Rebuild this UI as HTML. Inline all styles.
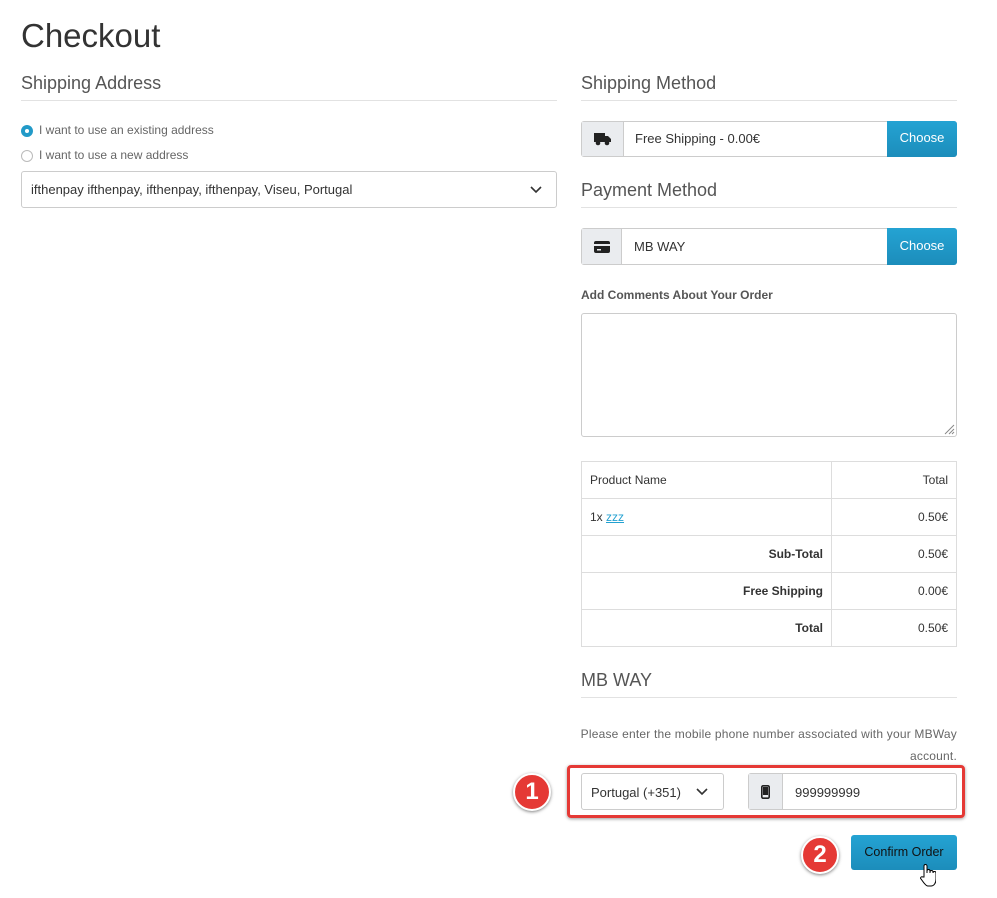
<!DOCTYPE html>
<html><head><meta charset="utf-8"><style>
*{box-sizing:border-box;margin:0;padding:0}
body{width:997px;height:898px;background:#fff;font-family:"Liberation Sans",sans-serif;color:#333;position:relative;overflow:hidden}
.a{position:absolute}
h1{position:absolute;left:21px;top:17px;font-size:33px;font-weight:normal;color:#333}
.h{position:absolute;font-size:18px;color:#555;}
.hr{position:absolute;height:1px;background:#e2e2e2}
.box{position:absolute;border:1px solid #ccc;border-radius:3px;background:#fff}
.addon{position:absolute;background:#eaecef;border-right:1px solid #ccc;top:0;bottom:0;left:0}
.btn{position:absolute;background:linear-gradient(#24a3d3,#1c8dbb);color:#fff;font-size:13px;text-align:center;border-radius:0 3px 3px 0}
.t{position:absolute;font-size:13px}
table{position:absolute;left:581px;top:461px;width:376px;border-collapse:collapse;font-size:12px;color:#333}
td{border:1px solid #ddd;height:37px;padding:0 8px}
.r{text-align:right}
.circ{position:absolute;width:38px;height:38px;border-radius:50%;background:#e53935;border:2px solid #fff;box-shadow:0 1px 3px rgba(0,0,0,.5);color:#fff;font-weight:bold;font-size:24px;text-align:center;line-height:34px}
</style></head><body>
<h1>Checkout</h1>
<div class="h" style="left:21px;top:73px">Shipping Address</div>
<div class="hr" style="left:21px;top:100px;width:536px"></div>
<div class="a" style="left:21px;top:125px;width:12px;height:12px;border-radius:50%;background:#229ac8"><div class="a" style="left:4px;top:4px;width:4px;height:4px;background:#fff;border-radius:50%"></div></div>
<div class="t" style="left:39px;top:123px;font-size:12px;color:#666">I want to use an existing address</div>
<div class="a" style="left:21px;top:150px;width:12px;height:12px;border-radius:50%;border:1px solid #bbb"></div>
<div class="t" style="left:39px;top:148px;font-size:12px;color:#666">I want to use a new address</div>
<div class="box" style="left:21px;top:171px;width:536px;height:37px"><div class="t" style="left:9px;top:10px">ifthenpay ifthenpay, ifthenpay, ifthenpay, Viseu, Portugal</div>
<svg class="a" style="left:508px;top:14px" width="12" height="8"><path d="M1 1l5 5 5-5" stroke="#333" stroke-width="1.6" fill="none"/></svg></div>

<div class="h" style="left:581px;top:73px">Shipping Method</div>
<div class="hr" style="left:581px;top:100px;width:376px"></div>
<div class="box" style="left:581px;top:121px;width:376px;height:36px"><div class="addon" style="width:42px"><svg class="a" style="left:12px;top:11px" width="17" height="13"><rect x="0" y="0" width="11" height="9" fill="#222"/><path d="M11 3h3l3 3v3h-6z" fill="#222"/><circle cx="4" cy="10" r="2.3" fill="#222"/><circle cx="13" cy="10" r="2.3" fill="#222"/></svg></div>
<div class="t" style="left:53px;top:9px">Free Shipping - 0.00€</div><div class="btn" style="left:305px;top:-1px;width:70px;height:36px;line-height:34px">Choose</div></div>

<div class="h" style="left:581px;top:180px">Payment Method</div>
<div class="hr" style="left:581px;top:207px;width:376px"></div>
<div class="box" style="left:581px;top:228px;width:376px;height:37px"><div class="addon" style="width:40px"><svg class="a" style="left:12px;top:12px" width="16" height="12"><rect x="0" y="0" width="16" height="12" rx="2" fill="#222"/><rect x="0" y="3" width="16" height="2" fill="#eaecef"/><rect x="3" y="8" width="4" height="1.5" fill="#eaecef"/></svg></div>
<div class="t" style="left:52px;top:10px">MB WAY</div><div class="btn" style="left:305px;top:-1px;width:70px;height:37px;line-height:35px">Choose</div></div>

<div class="t" style="left:581px;top:288px;font-size:12px;font-weight:bold;color:#555;top:288px;margin-top:0">Add Comments About Your Order</div>
<div class="box" style="left:581px;top:313px;width:376px;height:124px"><svg class="a" style="right:1px;bottom:1px" width="12" height="12"><path d="M11 2L2 11M11 6L6 11M11 9L9 11" stroke="#888"/></svg></div>

<table>
<tr><td>Product Name</td><td class="r">Total</td></tr>
<tr><td>1x <span style="color:#23a1d1;text-decoration:underline">zzz</span></td><td class="r">0.50€</td></tr>
<tr><td class="r" style="width:250px"><b>Sub-Total</b></td><td class="r">0.50€</td></tr>
<tr><td class="r"><b>Free Shipping</b></td><td class="r">0.00€</td></tr>
<tr><td class="r"><b>Total</b></td><td class="r">0.50€</td></tr>
</table>

<div class="h" style="left:581px;top:670px">MB WAY</div>
<div class="hr" style="left:581px;top:697px;width:376px"></div>
<div class="t" style="right:40px;top:723px;font-size:12px;color:#666;text-align:right;line-height:22px;letter-spacing:0.2px">Please enter the mobile phone number associated with your MBWay<br>account.</div>

<div class="a" style="left:567px;top:765px;width:398px;height:53px;border:3px solid #e53935;border-radius:4px;box-shadow:0 1px 3px rgba(0,0,0,.4)"></div>
<div class="box" style="left:581px;top:773px;width:143px;height:37px"><div class="t" style="left:9px;top:11px">Portugal (+351)</div><svg class="a" style="left:114px;top:14px" width="12" height="8"><path d="M1 1l5 5 5-5" stroke="#333" stroke-width="1.6" fill="none"/></svg></div>
<div class="box" style="left:748px;top:773px;width:209px;height:37px"><div class="addon" style="width:34px"><svg class="a" style="left:12px;top:11px" width="9" height="14"><rect x="0.8" y="0.8" width="7.4" height="12.4" rx="1.3" fill="none" stroke="#222" stroke-width="1.6"/><rect x="2" y="2" width="5" height="8" fill="#222"/></svg></div>
<div class="t" style="left:46px;top:11px">999999999</div></div>
<div class="circ" style="left:513px;top:773px">1</div>

<div class="a" style="left:851px;top:835px;width:106px;height:35px;background:linear-gradient(#24a3d3,#1c8dbb);border-radius:3px;color:#111;font-size:12.5px;text-align:center;line-height:34px">Confirm Order</div>
<div class="circ" style="left:801px;top:836px">2</div>
<svg class="a" style="left:920px;top:863px" width="16" height="26"><path d="M4 14V3a1.5 1.5 0 013 0v7 -2a1.5 1.5 0 013 0v2-1a1.5 1.5 0 013 0v1a1.5 1.5 0 013 0v6c0 4-2 7-5 7H8c-2 0-3-2-4-3L1 16c-1-1 0-3 2-2z" fill="#fff" stroke="#000" stroke-width="1"/></svg>
</body></html>
